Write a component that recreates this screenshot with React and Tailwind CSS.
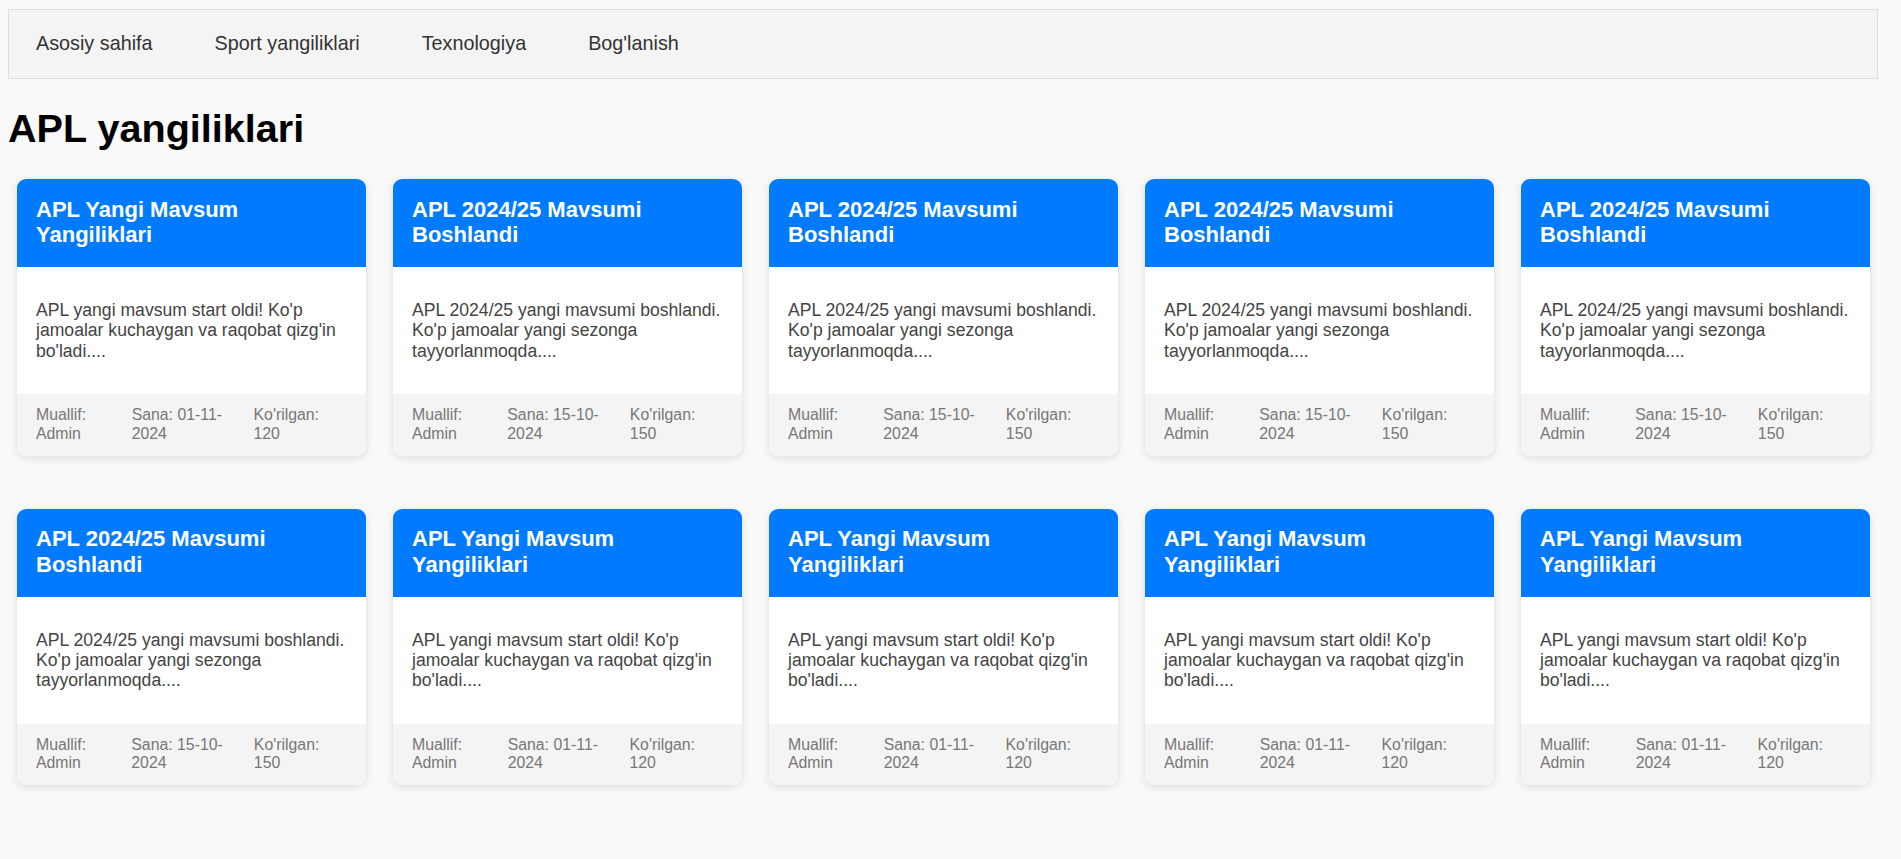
import React from "react";

const navLinks = ["Asosiy sahifa", "Sport yangiliklari", "Texnologiya", "Bog'lanish"];

const oldNews = {
  title: "APL Yangi Mavsum Yangiliklari",
  text: "APL yangi mavsum start oldi! Ko'p jamoalar kuchaygan va raqobat qizg'in bo'ladi....",
  date: "01-11-2024",
  views: 120,
};

const newSeason = {
  title: "APL 2024/25 Mavsumi Boshlandi",
  text: "APL 2024/25 yangi mavsumi boshlandi. Ko'p jamoalar yangi sezonga tayyorlanmoqda....",
  date: "15-10-2024",
  views: 150,
};

const news = [
  oldNews,
  newSeason,
  newSeason,
  newSeason,
  newSeason,
  newSeason,
  oldNews,
  oldNews,
  oldNews,
  oldNews,
];

const NewsCard = ({ item }) => (
  <div className="w-[349px] rounded-[9px] overflow-hidden bg-white shadow-[0_2px_8px_rgba(0,0,0,0.12)]">
    <div className="bg-[#007bff] px-[19px] pt-[17.5px] pb-[20px]">
      <h3 className="text-white text-[22px] font-bold leading-[25.3px]">{item.title}</h3>
    </div>
    <div className="px-[19px] pt-[33px] pb-[33px]">
      <p className="text-[#444] text-[17.6px] leading-[20.24px]">{item.text}</p>
    </div>
    <div className="bg-[#f4f4f4] px-[19px] pt-[12.5px] pb-[13px] flex text-[#777] text-[15.84px] leading-[18.2px]">
      <span>Muallif: Admin</span>
      <span>Sana: {item.date}</span>
      <span>Ko'rilgan: {item.views}</span>
    </div>
  </div>
);

const App = () => {
  return (
    <div
      className="min-h-screen bg-[#f9f9f9] pt-[9px] pb-10"
      style={{ fontFamily: '"Liberation Sans", Arial, sans-serif' }}
    >
      <nav className="ml-[8px] mr-[23px] h-[70px] bg-[#f4f4f4] border border-[#ddd] flex items-center pl-[27px] gap-[62px] text-[19.8px] text-[#333]">
        {navLinks.map((link) => (
          <a key={link} href="#" className="leading-none">
            {link}
          </a>
        ))}
      </nav>

      <h1 className="ml-[8px] mt-[26px] text-[39.6px] leading-[46px] font-bold text-black">APL yangiliklari</h1>

      <div className="mt-[28px] pl-[17px] grid grid-cols-[repeat(5,349px)] gap-x-[27px] gap-y-[53px]">
        {news.map((item, i) => (
          <NewsCard key={i} item={item} />
        ))}
      </div>
    </div>
  );
};

export default App;
